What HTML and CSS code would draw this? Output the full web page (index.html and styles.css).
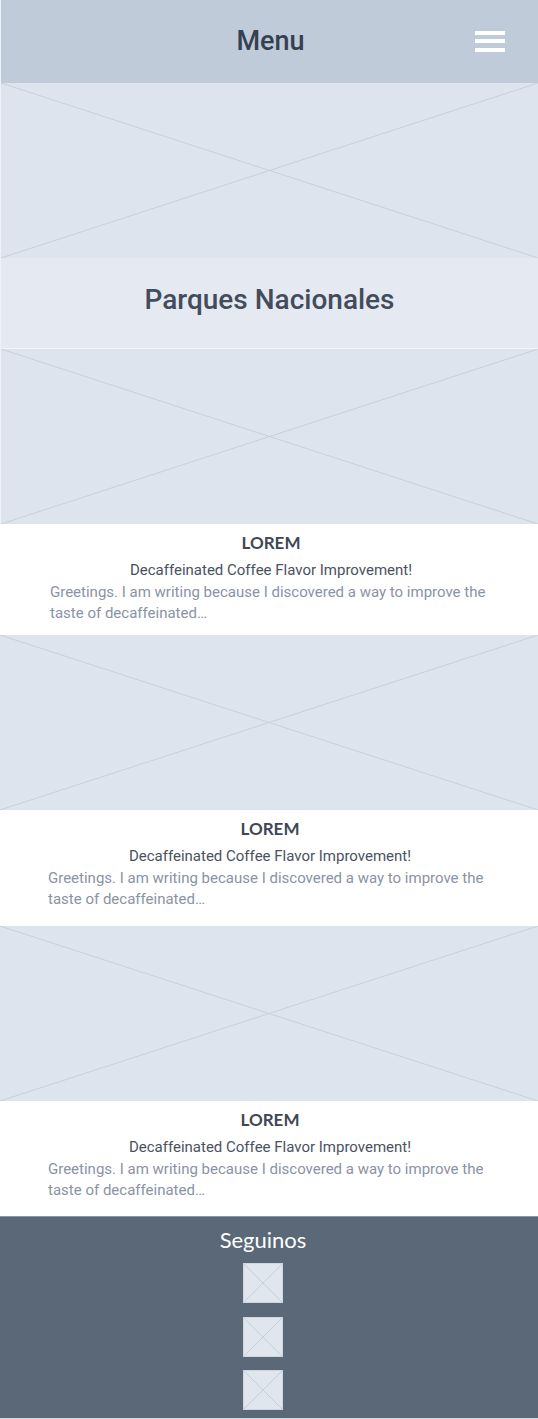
FILE: index.html
```html
<!DOCTYPE html>
<html lang="es">
<head>
<meta charset="utf-8">
<title>Parques Nacionales</title>
<link rel="stylesheet" href="styles.css">
</head>
<body>
<div class="page">
  <header class="topbar">
    <span></span>
    <h1 class="topbar-title">Menu</h1>
    <button class="burger" aria-label="menu">
      <span class="burger-bar"></span>
      <span class="burger-bar"></span>
      <span class="burger-bar"></span>
    </button>
  </header>

  <div class="ph ph--inset">
    <svg class="ph-x" viewBox="0 0 100 100" preserveAspectRatio="none"><line x1="0" y1="0" x2="100" y2="100"/><line x1="100" y1="0" x2="0" y2="100"/></svg>
  </div>

  <section class="band">
    <h2 class="band-title">Parques Nacionales</h2>
  </section>

  <div class="ph ph--inset">
    <svg class="ph-x" viewBox="0 0 100 100" preserveAspectRatio="none"><line x1="0" y1="0" x2="100" y2="100"/><line x1="100" y1="0" x2="0" y2="100"/></svg>
  </div>

  <article class="card">
    <h3 class="card-title">LOREM</h3>
    <p class="card-sub">Decaffeinated Coffee Flavor Improvement!</p>
    <p class="card-body">Greetings. I am writing because I discovered a way to improve the taste of decaffeinated…</p>
  </article>

  <div class="ph">
    <svg class="ph-x" viewBox="0 0 100 100" preserveAspectRatio="none"><line x1="0" y1="0" x2="100" y2="100"/><line x1="100" y1="0" x2="0" y2="100"/></svg>
  </div>

  <article class="card card--alt">
    <h3 class="card-title">LOREM</h3>
    <p class="card-sub">Decaffeinated Coffee Flavor Improvement!</p>
    <p class="card-body">Greetings. I am writing because I discovered a way to improve the taste of decaffeinated…</p>
  </article>

  <div class="ph">
    <svg class="ph-x" viewBox="0 0 100 100" preserveAspectRatio="none"><line x1="0" y1="0" x2="100" y2="100"/><line x1="100" y1="0" x2="0" y2="100"/></svg>
  </div>

  <article class="card card--alt card--last">
    <h3 class="card-title">LOREM</h3>
    <p class="card-sub">Decaffeinated Coffee Flavor Improvement!</p>
    <p class="card-body">Greetings. I am writing because I discovered a way to improve the taste of decaffeinated…</p>
  </article>

  <footer class="footer">
    <h4 class="footer-title">Seguinos</h4>
    <div class="social">
      <a class="social-icon" href="#"><svg viewBox="0 0 100 100" preserveAspectRatio="none"><line x1="0" y1="0" x2="100" y2="100"/><line x1="100" y1="0" x2="0" y2="100"/></svg></a>
      <a class="social-icon" href="#"><svg viewBox="0 0 100 100" preserveAspectRatio="none"><line x1="0" y1="0" x2="100" y2="100"/><line x1="100" y1="0" x2="0" y2="100"/></svg></a>
      <a class="social-icon" href="#"><svg viewBox="0 0 100 100" preserveAspectRatio="none"><line x1="0" y1="0" x2="100" y2="100"/><line x1="100" y1="0" x2="0" y2="100"/></svg></a>
    </div>
  </footer>
</div>
</body>
</html>
```

FILE: styles.css
```css
html, body {
  margin: 0;
  padding: 0;
}

body {
  background: #d3d9e1;
  font-family: Roboto, "Liberation Sans", sans-serif;
}

.page {
  width: 538px;
  background: #eef1f5;
}

.topbar {
  margin-left: 1px;
  height: 83px;
  background: #bfcbd9;
  display: grid;
  grid-template-columns: 1fr auto 1fr;
  align-items: center;
  padding-bottom: 2px;
  box-sizing: border-box;
}

.topbar-title {
  margin: 0;
  font-family: Roboto, sans-serif;
  font-weight: 500;
  font-size: 27px;
  color: #36404f;
  line-height: 32px;
  padding-left: 2px;
}

.burger {
  justify-self: end;
  margin-right: 33px;
  padding: 0;
  border: 0;
  background: none;
  width: 30px;
  display: flex;
  flex-direction: column;
  gap: 4.5px;
  margin-top: 1px;
}

.burger-bar {
  display: block;
  height: 4px;
  background: #ffffff;
}

.ph {
  height: 175px;
  background: #dee4ed;
  position: relative;
}

.ph--inset {
  margin-left: 1px;
}

.ph-x {
  display: block;
  width: 100%;
  height: 100%;
}

.ph-x line,
.social-icon line {
  stroke: #c9cedd;
  stroke-width: 1;
  vector-effect: non-scaling-stroke;
}

.band {
  margin-left: 1px;
  height: 91px;
  background: #e5eaf2;
  border-bottom: 1px solid #f3f5f9;
  display: flex;
  align-items: center;
  justify-content: center;
  padding-bottom: 6px;
  box-sizing: border-box;
}

.band-title {
  margin: 0;
  font-family: Roboto, sans-serif;
  font-weight: 500;
  font-size: 28px;
  line-height: 32px;
  color: #434c5b;
}

.card {
  background: #ffffff;
  padding: 9px 46px 11px 50px;
  text-align: center;
}

.card--alt {
  padding: 9px 46px 16px 48px;
}

.card--last {
  padding-bottom: 15px;
}

.card-title {
  margin: 0;
  font-family: Lato, "Open Sans", sans-serif;
  font-weight: 700;
  font-size: 17px;
  line-height: 20px;
  color: #3f4755;
}

.card-sub {
  margin: 7px 0 0;
  font-size: 15px;
  line-height: 20px;
  color: #4a5261;
}

.card-body {
  margin: 2px 0 0;
  font-size: 15px;
  line-height: 21px;
  color: #8a93a5;
  text-align: left;
}

.footer {
  background: #5a6878;
  border-top: 1px solid #8e98a4;
  padding: 10px 12px 8px 0;
  display: flex;
  flex-direction: column;
  align-items: center;
}

.footer-title {
  margin: 0;
  font-family: Lato, sans-serif;
  font-weight: 400;
  font-size: 22px;
  line-height: 26px;
  color: #ffffff;
}

.social {
  margin-top: 10px;
  display: flex;
  flex-direction: column;
  gap: 13.5px;
}

.social-icon {
  display: block;
  width: 40px;
  height: 40px;
  background: #e0e6ee;
  box-sizing: border-box;
  border: 1px solid #cfd6df;
}

.social-icon svg {
  display: block;
  width: 100%;
  height: 100%;
}
```
